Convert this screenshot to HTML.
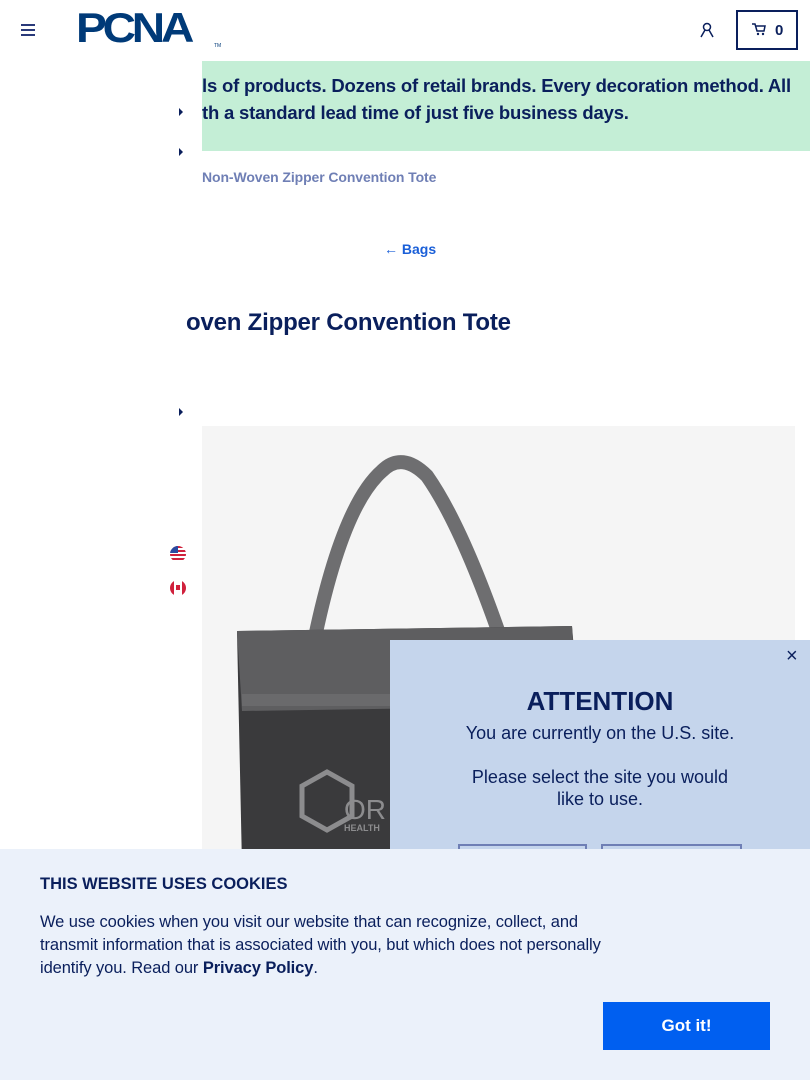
<!DOCTYPE html>
<html><head><meta charset="utf-8"><style>
*{margin:0;padding:0;box-sizing:border-box}
body{width:810px;height:1080px;overflow:hidden;position:relative;background:#fff;font-family:"Liberation Sans",Arial,sans-serif;color:#0a1f5c}
.abs{position:absolute}
</style></head><body>
<div class="abs" style="left:21px;top:24px;width:14px;">
<div style="height:2px;background:#2a3a7a;margin-bottom:3px"></div><div style="height:2px;background:#2a3a7a;margin-bottom:3px"></div><div style="height:2px;background:#2a3a7a"></div></div>
<div class="abs" style="left:76px;top:8px;font-weight:900;font-size:44px;line-height:44px;letter-spacing:-4px;color:#003a78;transform:scale(1.05,0.95);transform-origin:left top">PCNA</div>
<div class="abs" style="left:214px;top:43px;font-size:5px;color:#003a78">TM</div>
<svg class="abs" style="left:700px;top:22px" width="14" height="16" viewBox="0 0 14 16"><circle cx="7" cy="5" r="3.5" fill="none" stroke="#0a1f5c" stroke-width="1.5"/><path d="M1 15 L5 8 M13 15 L9 8" stroke="#0a1f5c" stroke-width="1.5"/></svg>
<div class="abs" style="left:736px;top:10px;width:62px;height:40px;border:2px solid #0a1f5c"></div>
<svg class="abs" style="left:752px;top:23px" width="14" height="13" viewBox="0 0 14 13"><path d="M0 1h3l2 7h7l1-5H4" fill="none" stroke="#0a1f5c" stroke-width="1.5"/><circle cx="6" cy="11" r="1.2" fill="#0a1f5c"/><circle cx="11" cy="11" r="1.2" fill="#0a1f5c"/></svg>
<div class="abs" style="left:775px;top:22px;font-weight:bold;font-size:15px">0</div>
<div class="abs" style="left:202px;top:61px;width:608px;height:90px;background:#c4eed6"></div>
<div class="abs" style="left:202px;top:72px;font-weight:bold;font-size:18.5px;line-height:27px;white-space:nowrap;overflow:hidden;width:608px;letter-spacing:-0.2px">ls of products. Dozens of retail brands. Every decoration method. All<br>th a standard lead time of just five business days.</div>
<div class="abs" style="left:179px;top:108px;width:0;height:0;border-left:4px solid #0a1f5c;border-top:4px solid transparent;border-bottom:4px solid transparent"></div>
<div class="abs" style="left:179px;top:148px;width:0;height:0;border-left:4px solid #0a1f5c;border-top:4px solid transparent;border-bottom:4px solid transparent"></div>
<div class="abs" style="left:179px;top:408px;width:0;height:0;border-left:4px solid #0a1f5c;border-top:4px solid transparent;border-bottom:4px solid transparent"></div>
<div class="abs" style="left:202px;top:169px;font-size:14px;font-weight:bold;color:#6f7fb5;letter-spacing:-0.1px">Non-Woven Zipper Convention Tote</div>
<div class="abs" style="left:384px;top:241px;font-size:14px;font-weight:bold;color:#1a5fd8">← Bags</div>
<div class="abs" style="left:186px;top:309px;font-size:24px;font-weight:bold;width:400px;white-space:nowrap;letter-spacing:-0.2px">oven Zipper Convention Tote</div>
<div class="abs" style="left:202px;top:426px;width:593px;height:440px;background:#f5f5f5"></div>
<svg class="abs" style="left:202px;top:426px" width="593" height="440" viewBox="0 0 593 440">
<path d="M112 216 Q140 80 180 45 Q200 25 225 50 Q260 100 300 216" fill="none" stroke="#6e6e70" stroke-width="14"/>
<path d="M35 205 L370 200 L390 440 L40 440 Z" fill="#3a3a3c"/>
<path d="M35 205 L370 200 L375 280 L40 285 Z" fill="#5e5e60"/>
<rect x="40" y="268" width="335" height="12" fill="#6a6a6c"/>
<path d="M100 360 l25 -14 25 14 v30 l-25 14 -25 -14z" fill="none" stroke="#8c8c8e" stroke-width="5"/>
<text x="142" y="393" font-size="28" fill="#8c8c8e" font-family="Liberation Sans">OR</text>
<text x="142" y="405" font-size="9" font-weight="bold" fill="#8c8c8e" font-family="Liberation Sans">HEALTH</text>
</svg>
<div class="abs" style="left:170px;top:546px;width:16px;height:16px;border-radius:50%;background:repeating-linear-gradient(#d0213c 0 2px,#fff 2px 4px);overflow:hidden"><div style="width:8px;height:7px;background:#2a4aa0"></div></div>
<div class="abs" style="left:170px;top:580px;width:16px;height:16px;border-radius:50%;background:linear-gradient(90deg,#d0213c 0 4px,#fff 4px 12px,#d0213c 12px)"><div style="position:absolute;left:6px;top:5px;width:4px;height:5px;background:#d0213c"></div></div>
<div class="abs" style="left:390px;top:640px;width:420px;height:220px;background:#c5d5ec"></div>
<div class="abs" style="left:786px;top:645px;font-size:20px;color:#0a1f5c">×</div>
<div class="abs" style="left:390px;top:686px;width:420px;text-align:center;font-size:26px;font-weight:bold">ATTENTION</div>
<div class="abs" style="left:390px;top:722px;width:420px;text-align:center;font-size:18px;line-height:22px;color:#0a1f5c">You are currently on the U.S. site.<br><br>Please select the site you would<br>like to use.</div>
<div class="abs" style="left:458px;top:844px;width:129px;height:10px;border:2px solid #6f7fb5;background:#c5d5ec"></div>
<div class="abs" style="left:601px;top:844px;width:141px;height:10px;border:2px solid #6f7fb5;background:#c5d5ec"></div>
<div class="abs" style="left:0;top:849px;width:810px;height:231px;background:#ebf1fa"></div>
<div class="abs" style="left:40px;top:875px;font-size:16.5px;font-weight:bold">THIS WEBSITE USES COOKIES</div>
<div class="abs" style="left:40px;top:911px;width:570px;font-size:16.5px;line-height:23px;color:#0a1f5c;letter-spacing:-0.1px">We use cookies when you visit our website that can recognize, collect, and transmit information that is associated with you, but which does not personally identify you. Read our <b>Privacy Policy</b>.</div>
<div class="abs" style="left:603px;top:1002px;width:167px;height:48px;background:#005ff0;color:#fff;font-weight:bold;font-size:17px;text-align:center;line-height:48px">Got it!</div>
</body></html>
